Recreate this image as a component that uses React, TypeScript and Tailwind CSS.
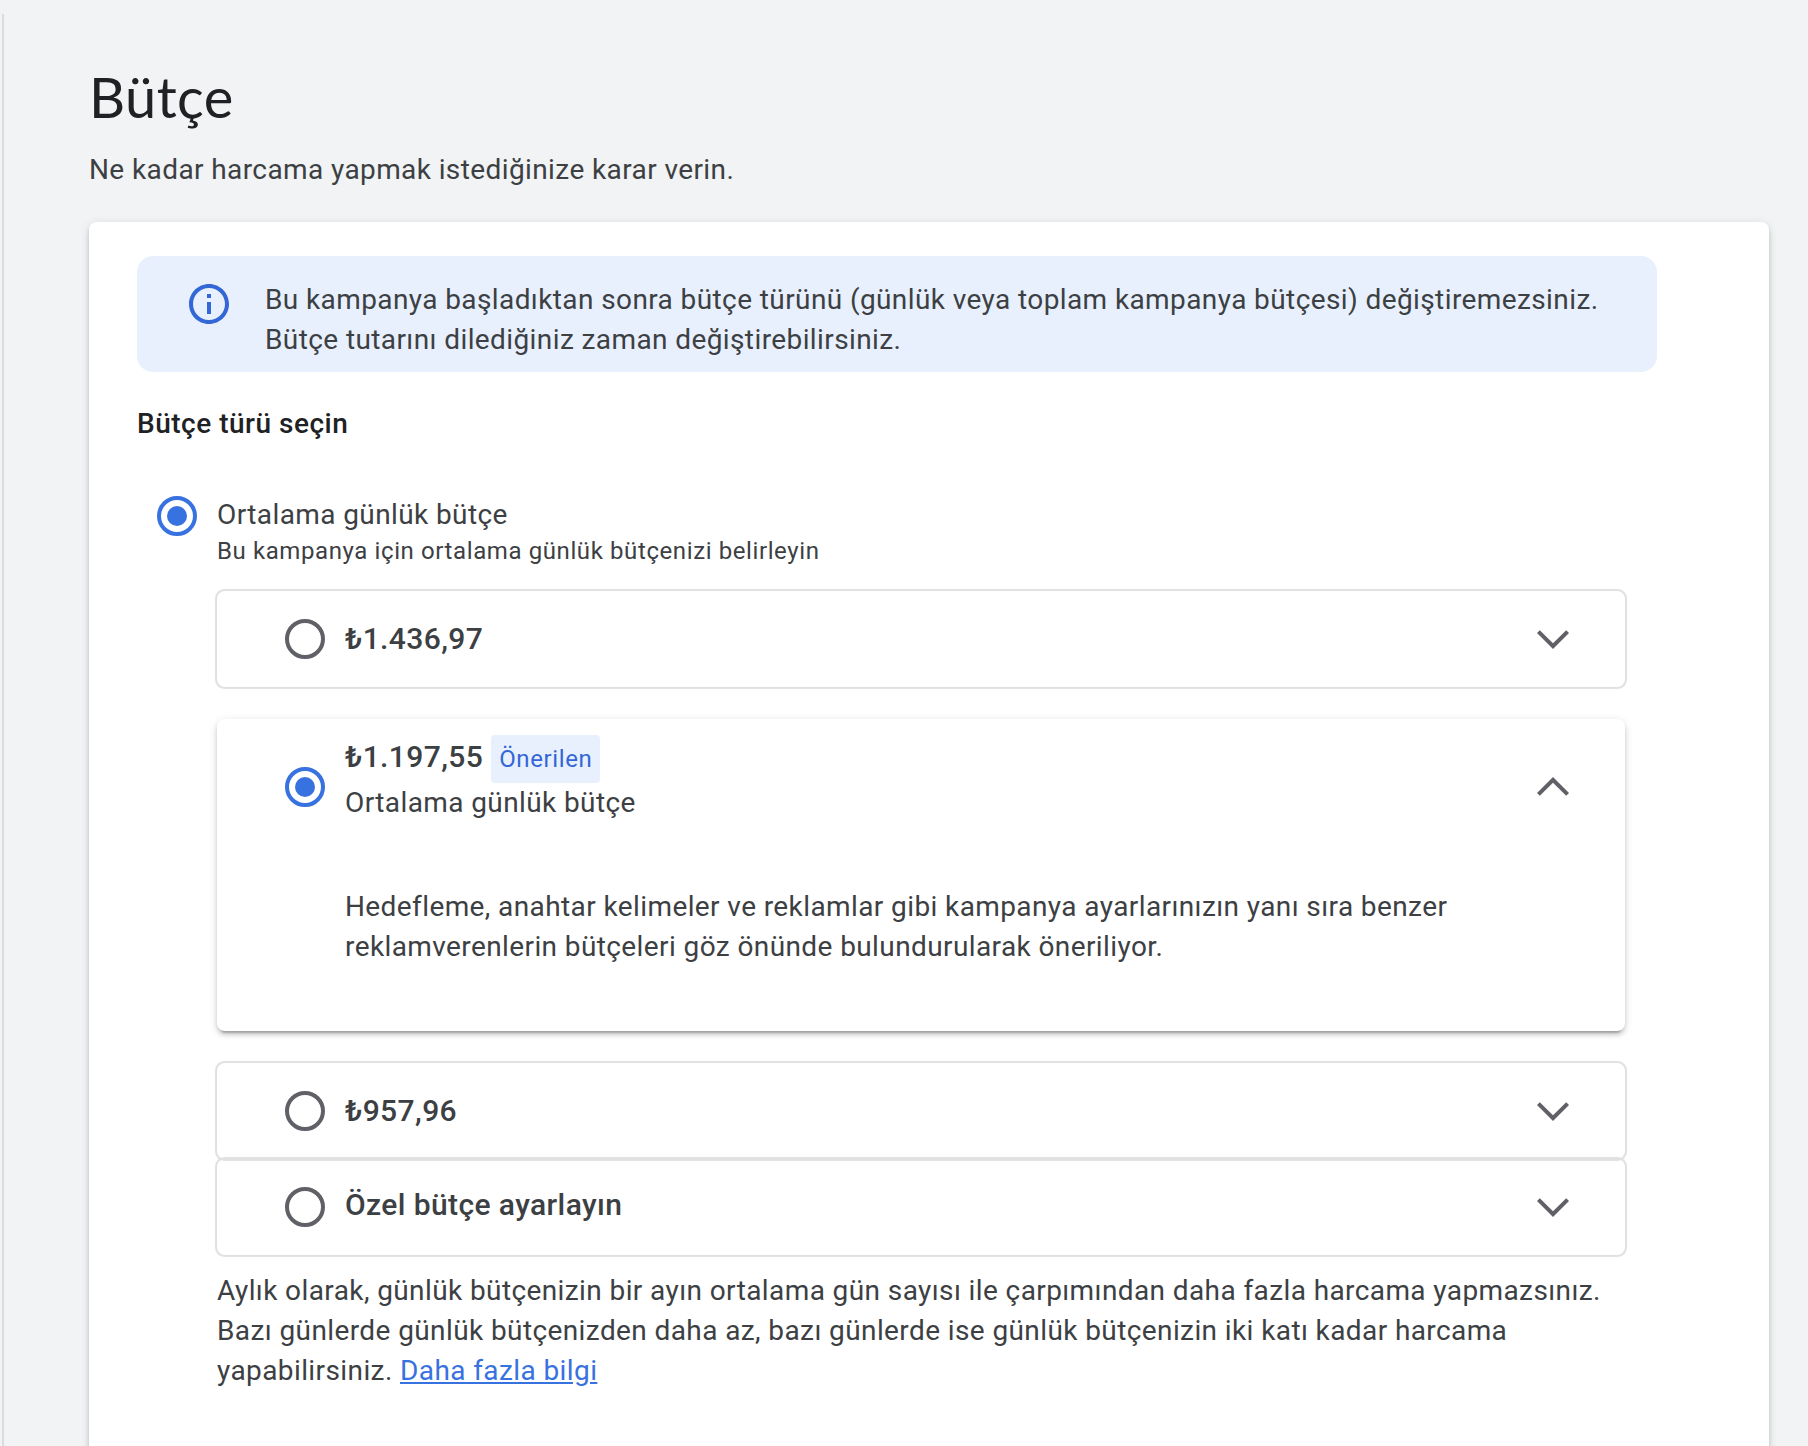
import React, { useState } from "react";

const Radio = ({ checked }: { checked: boolean }) => (
  <span
    className={
      checked
        ? "flex h-10 w-10 shrink-0 items-center justify-center rounded-full border-4 border-[#3871e0]"
        : "flex h-10 w-10 shrink-0 items-center justify-center rounded-full border-4 border-[#606167]"
    }
  >
    {checked && <span className="h-5 w-5 rounded-full bg-[#3871e0]" />}
  </span>
);

const Chevron = ({ open }: { open: boolean }) => (
  <svg viewBox="0 0 24 24" className="h-12 w-12 shrink-0 fill-[#606167]">
    {open ? (
      <path d="M18.59 16.41L20 15l-8-8-8 8 1.41 1.41L12 9.83z" />
    ) : (
      <path d="M5.41 7.59L4 9l8 8 8-8-1.41-1.41L12 14.17z" />
    )}
  </svg>
);

const InfoIcon = () => (
  <svg viewBox="0 0 24 24" className="h-12 w-12 shrink-0 fill-[#3367d6]">
    <path d="M11 7h2v2h-2zM11 11h2v6h-2zM12 2C6.48 2 2 6.48 2 12s4.48 10 10 10 10-4.48 10-10S17.52 2 12 2zm0 18c-4.41 0-8-3.59-8-8s3.59-8 8-8 8 3.59 8 8-3.59 8-8 8z" />
  </svg>
);

const options = [
  { id: "high", label: "₺1.436,97", className: "mb-8" },
  {
    id: "recommended",
    label: "₺1.197,55",
    badge: "Önerilen",
    className: "mb-8",
  },
  { id: "low", label: "₺957,96", className: "" },
  { id: "custom", label: "Özel bütçe ayarlayın", className: "" },
];

const App = () => {
  const [selected, setSelected] = useState("recommended");

  return (
    <div className="h-[1446px] overflow-hidden bg-[#f1f3f4] pt-3.5 font-[Roboto,sans-serif] text-[28px] leading-10 tracking-[0.4px] text-[#3c4043]">
      <div className="ml-0.5 h-full border-l-2 border-[#dadce0] pl-[85px]">
        <h1 className="pt-[47px] font-[Lato,sans-serif] text-[56px] leading-[72px] tracking-[0.4px] text-[#202124]">
          Bütçe
        </h1>
        <p className="mt-[17px]">
          Ne kadar harcama yapmak istediğinize karar verin.
        </p>

        <div className="mt-8 h-[1400px] w-[1680px] rounded-lg bg-white pt-[34px] pl-12 shadow-[0_6px_2px_-4px_rgba(0,0,0,0.2),0_4px_4px_0_rgba(0,0,0,0.14),0_2px_10px_0_rgba(0,0,0,0.12)]">
          <div className="flex h-[116px] w-[1520px] gap-8 rounded-2xl bg-[#e8f0fe] pt-6 pl-12">
            <InfoIcon />
            <p>
              Bu kampanya başladıktan sonra bütçe türünü (günlük veya toplam
              kampanya bütçesi) değiştiremezsiniz.
              <br />
              Bütçe tutarını dilediğiniz zaman değiştirebilirsiniz.
            </p>
          </div>

          <h2 className="mt-8 font-medium tracking-[0.5px] text-[#202124]">
            Bütçe türü seçin
          </h2>

          <div className="mt-[51px] ml-5 flex gap-5">
            <div className="pt-px">
              <Radio checked />
            </div>
            <div className="w-[1408px]">
              <div>Ortalama günlük bütçe</div>
              <div className="text-2xl leading-8 tracking-[0.6px]">
                Bu kampanya için ortalama günlük bütçenizi belirleyin
              </div>

              <div className="mt-6">
                {options.map((option) => {
                  const open = option.id === selected;
                  return (
                    <div
                      key={option.id}
                      onClick={() => setSelected(option.id)}
                      className={`rounded-lg ${option.className} ${
                        open
                          ? "h-[312px] shadow-[0_6px_2px_-4px_rgba(0,0,0,0.2),0_4px_4px_0_rgba(0,0,0,0.14),0_2px_10px_0_rgba(0,0,0,0.12)]"
                          : "h-24 shadow-[0_0_1px_1.5px_#e0e0e0]"
                      }`}
                    >
                      <div
                        className={`flex items-center gap-5 pr-12 pl-[68px] ${
                          open ? "h-[136px]" : "h-24"
                        }`}
                      >
                        <Radio checked={open} />
                        <div className={open ? "-mt-4 flex-1" : "flex-1"}>
                          <div
                            className={`flex items-baseline gap-2 text-[30px] font-medium ${
                              option.id === "custom" ? "-mt-1" : ""
                            }`}
                          >
                            {option.label}
                            {option.badge && (
                              <span className="h-12 rounded bg-[#e8f0fe] px-2 text-2xl leading-[48px] font-normal tracking-[0.6px] text-[#3367d6]">
                                {option.badge}
                              </span>
                            )}
                          </div>
                          {open && <div>Ortalama günlük bütçe</div>}
                        </div>
                        <Chevron open={open} />
                      </div>
                      {open && (
                        <p className="mt-8 pr-16 pl-32">
                          Hedefleme, anahtar kelimeler ve reklamlar gibi
                          kampanya ayarlarınızın yanı sıra benzer
                          <br />
                          reklamverenlerin bütçeleri göz önünde bulundurularak
                          öneriliyor.
                        </p>
                      )}
                    </div>
                  );
                })}
              </div>

              <p className="mt-4">
                Aylık olarak, günlük bütçenizin bir ayın ortalama gün sayısı ile
                çarpımından daha fazla harcama yapmazsınız.
                <br />
                Bazı günlerde günlük bütçenizden daha az, bazı günlerde ise
                günlük bütçenizin iki katı kadar harcama
                <br />
                yapabilirsiniz.{" "}
                <a href="#" className="text-[#3871e0] underline">
                  Daha fazla bilgi
                </a>
              </p>
            </div>
          </div>
        </div>
      </div>
    </div>
  );
};

export default App;
